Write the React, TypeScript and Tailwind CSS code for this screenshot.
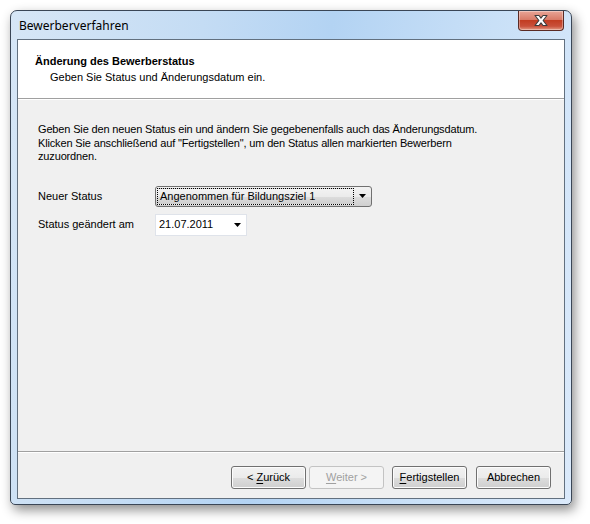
import React from "react";

const ui = { fontFamily: '"Liberation Sans", Arial, sans-serif' };
const titleFont = { fontFamily: '"Noto Sans", "Open Sans", sans-serif' };

function Arrow() {
  return (
    <svg width="7" height="4" viewBox="0 0 7 4">
      <path d="M0 0h7L3.5 4z" fill="#000" />
    </svg>
  );
}

function CloseButton() {
  return (
    <div className="absolute right-[7px] top-0 w-[46px] h-[20px] rounded-b-[4px] border border-t-0 border-[#5a2a24] bg-[linear-gradient(#e8a597_0%,#d97b68_45%,#c23d22_50%,#c9503a_80%,#e39a83_100%)] flex items-center justify-center shadow-[inset_0_0_0_1px_rgba(255,255,255,0.35)]">
      <svg width="16" height="13" viewBox="0 0 16 13">
        <path
          d="M2 1.5h4l2 2.6 2-2.6h4l-3.9 5 3.9 5h-4L8 8.9 6 11.5H2l3.9-5z"
          fill="#fff"
          stroke="#3b3b3b"
          strokeWidth="1.1"
          strokeLinejoin="round"
        />
      </svg>
    </div>
  );
}

function Button({ label, u, disabled }: { label: string; u?: number; disabled?: boolean }) {
  return (
    <div
      className={`w-[75px] h-[23px] rounded-[3px] border flex items-center justify-center text-[11px] ${
        disabled
          ? "border-[#c3c3c3] bg-[#f4f4f4] text-[#a0a0a0]"
          : "border-[#707070] bg-[linear-gradient(#f2f2f2_0%,#ebebeb_50%,#dddddd_51%,#cfcfcf_100%)] text-black shadow-[inset_0_0_0_1px_#fcfcfc]"
      }`}
    >
      {u === undefined ? (
        <span>{label}</span>
      ) : (
        <span>
          {label.slice(0, u)}
          <span className="underline underline-offset-2">{label[u]}</span>
          {label.slice(u + 1)}
        </span>
      )}
    </div>
  );
}

export default function App() {
  return (
    <div className="w-[590px] h-[524px] bg-white pt-[10px] pl-[10px]" style={ui}>
      <div className="relative w-[562px] h-[495px] rounded-t-[7px] rounded-b-[5px] border border-[#3a4656] bg-[linear-gradient(100deg,#d6e6f6_0%,#c4dcf4_30%,#b3d3f3_50%,#c9e0f7_75%,#dbeafb_100%)] shadow-[3px_5px_12px_rgba(0,0,0,0.45)] flex flex-col px-[6px] pb-[5px]">
        <CloseButton />
        <div className="h-[28px] flex items-center pl-[2px] pt-[1px] text-[12px] text-black" style={titleFont}>
          Bewerberverfahren
        </div>
        <div className="flex-1 border border-[#62707f] bg-[#f0f0f0] flex flex-col">
          <div className="h-[59px] bg-white border-b border-[#a0a0a0] pt-[14px] pl-[17px] text-[11px] shadow-[0_1px_0_#ffffff]">
            <div className="font-bold leading-[14px]">Änderung des Bewerberstatus</div>
            <div className="pl-[15px] pt-[2px] leading-[14px]">Geben Sie Status und Änderungsdatum ein.</div>
          </div>
          <div className="flex-1 pl-[20px] pt-[24px] text-[11px] text-black">
            <p className="leading-[13.5px] tracking-[-0.15px]">
              Geben Sie den neuen Status ein und ändern Sie gegebenenfalls auch das Änderungsdatum.
              <br />
              Klicken Sie anschließend auf "Fertigstellen", um den Status allen markierten Bewerbern
              <br />
              zuzuordnen.
            </p>
            <div className="mt-[22px] flex items-center">
              <span className="w-[117px]">Neuer Status</span>
              <div className="w-[217px] h-[21px] rounded-[3px] border border-[#707070] bg-[linear-gradient(#f2f2f2_0%,#ebebeb_50%,#dddddd_51%,#cfcfcf_100%)] flex items-center p-[1px]">
                <div className="w-[197px] h-[17px] border border-dotted border-black flex items-center pl-[2px] bg-[linear-gradient(#f2f2f2_0%,#ebebeb_50%,#dddddd_51%,#cfcfcf_100%)]">
                  Angenommen für Bildungsziel 1
                </div>
                <div className="flex-1 flex justify-center">
                  <Arrow />
                </div>
              </div>
            </div>
            <div className="mt-[7px] flex items-center">
              <span className="w-[117px]">Status geändert am</span>
              <div className="w-[92px] h-[22px] border border-[#dfe3ea] bg-white flex items-center pl-[3px]">
                <span className="flex-1">21.07.2011</span>
                <div className="w-[18px] flex justify-center">
                  <Arrow />
                </div>
              </div>
            </div>
          </div>
          <div className="h-[47px] border-t border-[#a0a0a0] shadow-[inset_0_1px_0_#ffffff] flex items-start pt-[14px] pl-[213px]">
            <Button label="< Zurück" u={2} />
            <div className="w-[3px]" />
            <Button label="Weiter >" u={0} disabled />
            <div className="w-[8px]" />
            <Button label="Fertigstellen" u={0} />
            <div className="w-[9px]" />
            <Button label="Abbrechen" />
          </div>
        </div>
      </div>
    </div>
  );
}
